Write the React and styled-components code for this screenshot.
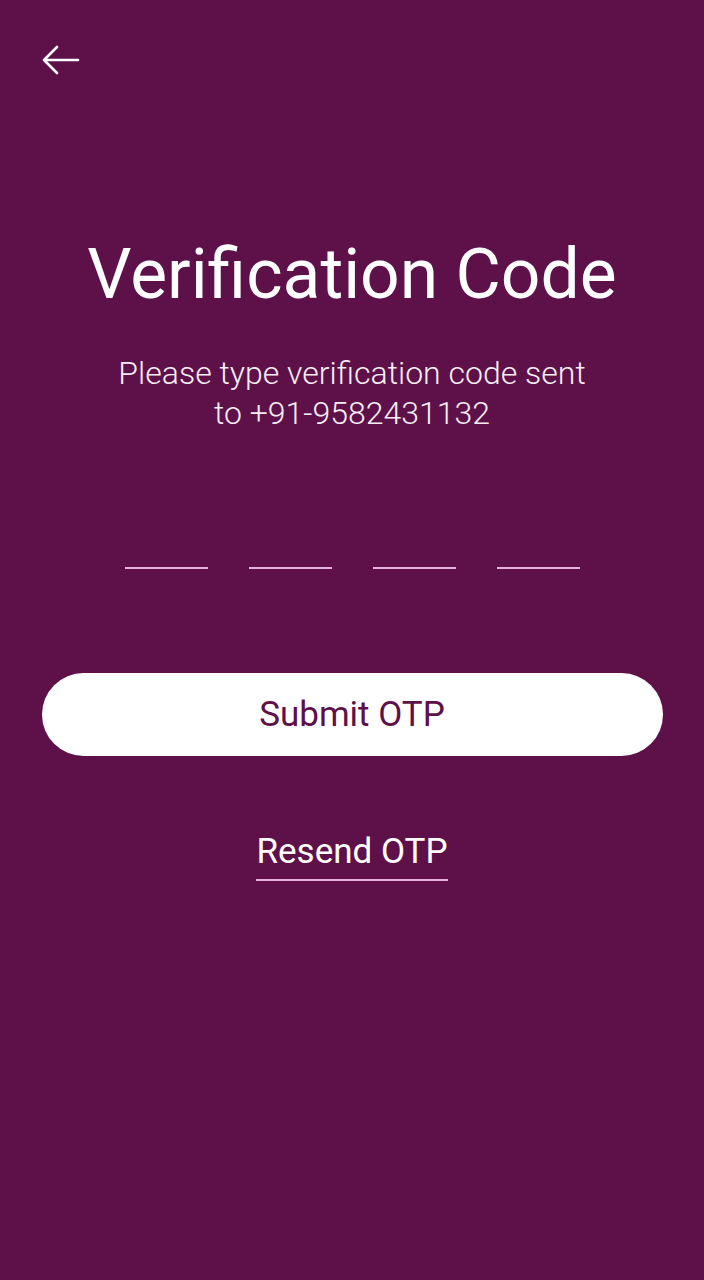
import styled, { createGlobalStyle } from "styled-components"

const GlobalStyle = createGlobalStyle`
  html, body {
    margin: 0;
    padding: 0;
    background: #5e1149;
  }
  * {
    box-sizing: border-box;
  }
`

const Screen = styled.div`
  width: 704px;
  height: 1280px;
  background: #5e1149;
  font-family: Roboto, "Noto Sans", sans-serif;
  color: #ffffff;
  display: flex;
  flex-direction: column;
  align-items: center;
`

const TopBar = styled.div`
  align-self: stretch;
  height: 120px;
  padding: 40px 0 0 38px;
`

const BackButton = styled.button`
  width: 44px;
  height: 40px;
  padding: 0;
  border: none;
  background: transparent;
  display: flex;
  align-items: center;
  justify-content: center;
  cursor: pointer;
`

const Title = styled.h1`
  margin: 113px 0 0;
  font-size: 69.6px;
  font-weight: 400;
  line-height: 82px;
`

const Subtitle = styled.p`
  margin: 38px 0 0;
  width: 480px;
  text-align: center;
  font-size: 32px;
  font-weight: 300;
  line-height: 40px;
  color: #f6eef4;
`

const CodeRow = styled.div`
  margin-top: 96px;
  display: flex;
  gap: 41px;
`

const CodeInput = styled.input`
  width: 83px;
  height: 40px;
  border: none;
  border-bottom: 2px solid #e3b1d9;
  background: transparent;
  color: #ffffff;
  font-family: inherit;
  font-size: 28px;
  text-align: center;
  outline: none;
  padding: 0;
`

const SubmitButton = styled.button`
  margin-top: 104px;
  width: 621px;
  height: 83px;
  border: none;
  border-radius: 42px;
  background: #ffffff;
  color: #5e1149;
  font-family: inherit;
  font-size: 35px;
  font-weight: 400;
  cursor: pointer;
`

const ResendLink = styled.button`
  margin-top: 74px;
  padding: 0 0 5px;
  border: none;
  border-bottom: 2px solid #e3b1d9;
  background: transparent;
  color: #ffffff;
  font-family: inherit;
  font-size: 35px;
  font-weight: 400;
  line-height: 44px;
  cursor: pointer;
`

const BackIcon = () => (
  <svg width="40" height="32" viewBox="0 0 40 32" fill="none">
    <path
      d="M38 16H4M17 3L4 16l13 13"
      stroke="#ffffff"
      strokeWidth="2.6"
      strokeLinecap="round"
      strokeLinejoin="round"
    />
  </svg>
)

const App = () => {
  return (
    <Screen>
      <GlobalStyle />
      <TopBar>
        <BackButton aria-label="Back">
          <BackIcon />
        </BackButton>
      </TopBar>
      <Title>Verification Code</Title>
      <Subtitle>
        Please type verification code sent to +91-9582431132
      </Subtitle>
      <CodeRow>
        <CodeInput maxLength={1} />
        <CodeInput maxLength={1} />
        <CodeInput maxLength={1} />
        <CodeInput maxLength={1} />
      </CodeRow>
      <SubmitButton>Submit OTP</SubmitButton>
      <ResendLink>Resend OTP</ResendLink>
    </Screen>
  )
}

export default App
